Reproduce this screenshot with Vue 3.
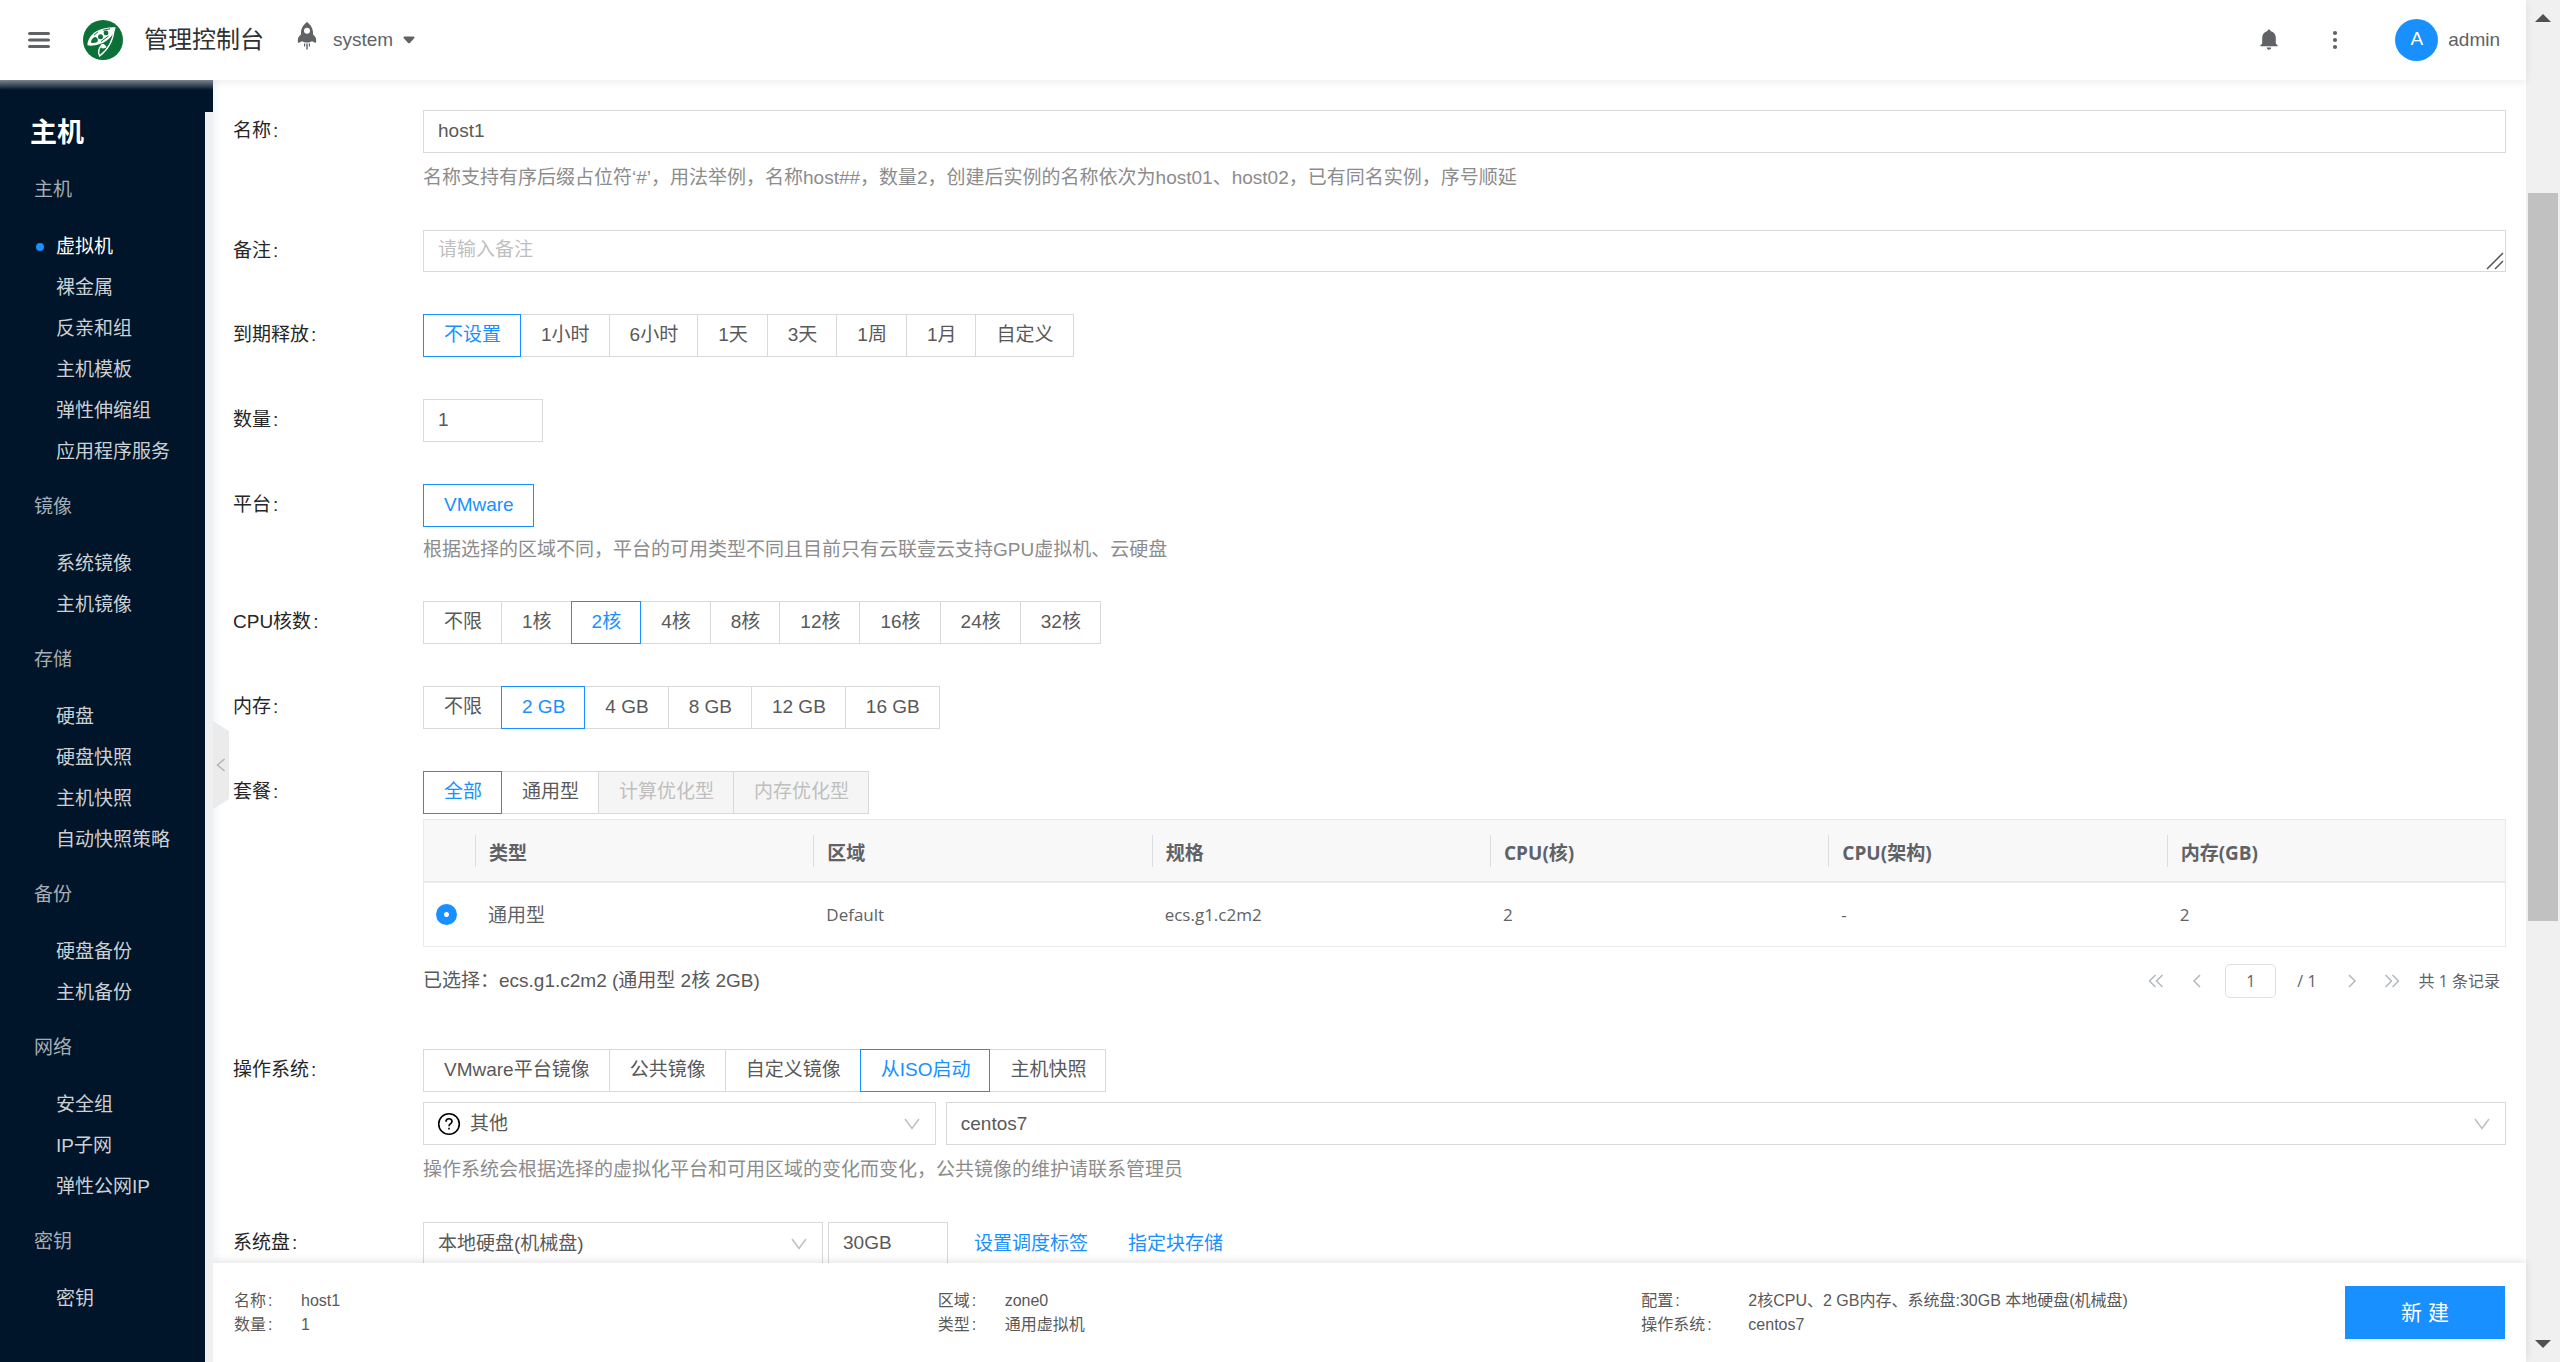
<script setup>
import { reactive } from 'vue'

const menu = [
  { title: '主机', items: ['虚拟机', '裸金属', '反亲和组', '主机模板', '弹性伸缩组', '应用程序服务'] },
  { title: '镜像', items: ['系统镜像', '主机镜像'] },
  { title: '存储', items: ['硬盘', '硬盘快照', '主机快照', '自动快照策略'] },
  { title: '备份', items: ['硬盘备份', '主机备份'] },
  { title: '网络', items: ['安全组', 'IP子网', '弹性公网IP'] },
  { title: '密钥', items: ['密钥'] },
]

const form = reactive({
  name: 'host1',
  remark: '',
  count: '1',
  release: '不设置',
  platform: 'VMware',
  cpu: '2核',
  memory: '2 GB',
  sku: '全部',
  skuRow: 'ecs.g1.c2m2',
  image: '从ISO启动',
  os: '其他',
  iso: 'centos7',
  disk: '本地硬盘(机械盘)',
  size: '30GB',
  page: '1',
})

const choices = {
  release: ['不设置', '1小时', '6小时', '1天', '3天', '1周', '1月', '自定义'],
  platform: ['VMware'],
  cpu: ['不限', '1核', '2核', '4核', '8核', '12核', '16核', '24核', '32核'],
  memory: ['不限', '2 GB', '4 GB', '8 GB', '12 GB', '16 GB'],
  sku: ['全部', '通用型', '计算优化型', '内存优化型'],
  image: ['VMware平台镜像', '公共镜像', '自定义镜像', '从ISO启动', '主机快照'],
}
const disabled = ['计算优化型', '内存优化型']

const columns = ['类型', '区域', '规格', 'CPU(核)', 'CPU(架构)', '内存(GB)']

const summary = [
  { rows: [['名称', 'host1'], ['数量', '1']] },
  { rows: [['区域', 'zone0'], ['类型', '通用虚拟机']] },
  { wide: true, rows: [['配置', '2核CPU、2 GB内存、系统盘:30GB 本地硬盘(机械盘)'], ['操作系统', 'centos7']] },
]
</script>

<template>
  <div class="window">
    <div class="app">
      <header class="topbar">
        <button class="icon-btn menu-btn" aria-label="菜单">
          <svg width="24" height="18" viewBox="0 0 24 18" fill="none" stroke="#606266" stroke-width="3" stroke-linecap="round">
            <path d="M2.5 2.5h19M2.5 9h19M2.5 15.500h19" />
          </svg>
        </button>
        <svg class="logo" width="40" height="40" viewBox="0 0 40 40">
          <circle cx="20" cy="20" r="20" fill="#0b7139" />
          <path d="M32.800 7.400C23 6.500 12 10 7.500 16.500C5.200 20 4 23.500 4.500 25.300C10 26.500 19 24.500 25 19.500C29 16 31.500 12 32.800 7.400Z" fill="#fff" />
          <path d="M31 8.700C30.500 19 25.500 29 16.600 36C14.500 32.500 15.500 28.500 19.500 24" fill="none" stroke="#fff" stroke-width="1.400" />
          <path d="M8 21.500c1-3 3.500-5 5-4.200c1.800.900 2.500 2.700 1.400 4.700c-2 .9-4.500 1.200-6.200.8z" fill="#0b7139" />
          <circle cx="17.500" cy="16.800" r="2.500" fill="#0b7139" />
          <circle cx="23" cy="13" r="2.400" fill="#0b7139" />
          <path d="M11 15.200L15 11.800M20 10.300L27 8.800M18 21.500L25.500 16" stroke="#0b7139" stroke-width="1" />
          <path d="M20.500 23.800l3 2.600c.3 1.500-4.800 3-5.300 1.200c-.2-1.400 1-2.800 2.300-3.800z" fill="#fff" />
        </svg>
        <h1 class="brand">管理控制台</h1>
        <svg class="rocket" width="20" height="28" viewBox="0 0 20 28" fill="#606266">
          <path fill-rule="evenodd" d="M10 0C6.500 2.500 4 6.500 4 10.500V12.500C2 14 .8 16 .8 18.200C.8 19.500 1 20.300 1.400 21L5 19.300C6.500 20.300 8 20.500 10 20.500S13.500 20.300 15 19.300L18.600 21C19 20.300 19.200 19.500 19.200 18.200C19.200 16 18 14 16 12.500V10.500C16 6.500 13.500 2.500 10 0ZM10 5.800a3 3 0 1 1 0 6a3 3 0 1 1 0-6Z" />
          <path d="M7 21.500h1.200v3H7zM9.300 21.500h1.400v6H9.300zM11.800 21.500H13v3h-1.200z" />
        </svg>
        <button class="text-btn">
          system
          <svg width="12" height="8" viewBox="0 0 12 8" fill="#606266"><path d="M1.500.5h9c1 0 1.300 1 .7 1.700L6.900 6.900c-.5.600-1.300.6-1.800 0L.8 2.200C.2 1.500.5.5 1.500.5z" /></svg>
        </button>
        <span class="spacer"></span>
        <button class="icon-btn bell" aria-label="通知">
          <svg width="18" height="22" viewBox="0 0 18 22" fill="#606266">
            <path d="M9 0.500c.9 0 1.500.6 1.500 1.500c3.400.7 5.300 3.400 5.300 6.800v5.700l1.900 1.900v.8H.3v-.8l1.900-1.900V8.800C2.200 5.400 4.100 2.700 7.500 2C7.500 1.100 8.100.5 9 .5zM6.800 18.600h4.400c0 1.300-1 2.200-2.200 2.200s-2.200-.9-2.200-2.200z" />
          </svg>
        </button>
        <button class="icon-btn dots" aria-label="更多">
          <svg width="6" height="20" viewBox="0 0 6 20" fill="#606266"><circle cx="3" cy="3" r="2.100" /><circle cx="3" cy="10" r="2.100" /><circle cx="3" cy="17" r="2.100" /></svg>
        </button>
        <button class="text-btn user"><span class="avatar">A</span>admin</button>
      </header>

      <div class="body">
        <aside class="side">
          <nav class="nav">
            <h2 class="nav-title">主机</h2>
            <section v-for="(g, gi) in menu" :key="gi" class="group">
              <h3 class="group-title">{{ g.title }}</h3>
              <a v-for="(t, i) in g.items" :key="t" href="#" class="item" :class="{ active: gi === 0 && i === 0 }">{{ t }}</a>
            </section>
          </nav>
          <div class="track"></div>
          <button class="fold" aria-label="收起">
            <svg width="10" height="14" viewBox="0 0 10 14" fill="none" stroke="#b4b4b4" stroke-width="1.500"><path d="M8.500 1L1.500 7l7 6" /></svg>
          </button>
        </aside>

        <div class="main">
          <form class="form" @submit.prevent>
            <div class="row">
              <label class="label" for="name">名称</label>
              <div>
                <input id="name" v-model="form.name" class="box full" type="text" />
                <p class="help">名称支持有序后缀占位符‘#’，用法举例，名称host##，数量2，创建后实例的名称依次为host01、host02，已有同名实例，序号顺延</p>
              </div>
            </div>

            <div class="row">
              <label class="label" for="remark">备注</label>
              <div class="area">
                <textarea id="remark" v-model="form.remark" class="box full" rows="1" placeholder="请输入备注"></textarea>
                <svg class="grip" width="18" height="18" viewBox="0 0 18 18" stroke="#555" stroke-width="1.500"><path d="M1 17L17 1M9 17l8-8" /></svg>
              </div>
            </div>

            <div class="row">
              <span id="l-release" class="label">到期释放</span>
              <div class="seg" role="radiogroup" aria-labelledby="l-release">
                <label v-for="o in choices.release" :key="o" class="opt"><input v-model="form.release" type="radio" name="release" :value="o" /><span>{{ o }}</span></label>
              </div>
            </div>

            <div class="row">
              <label class="label" for="count">数量</label>
              <div><input id="count" v-model="form.count" class="box short" type="text" /></div>
            </div>

            <div class="row">
              <span id="l-platform" class="label">平台</span>
              <div>
                <div class="seg" role="radiogroup" aria-labelledby="l-platform">
                  <label v-for="o in choices.platform" :key="o" class="opt"><input v-model="form.platform" type="radio" name="platform" :value="o" /><span>{{ o }}</span></label>
                </div>
                <p class="help near">根据选择的区域不同，平台的可用类型不同且目前只有云联壹云支持GPU虚拟机、云硬盘</p>
              </div>
            </div>

            <div class="row">
              <span id="l-cpu" class="label">CPU核数</span>
              <div class="seg" role="radiogroup" aria-labelledby="l-cpu">
                <label v-for="o in choices.cpu" :key="o" class="opt"><input v-model="form.cpu" type="radio" name="cpu" :value="o" /><span>{{ o }}</span></label>
              </div>
            </div>

            <div class="row">
              <span id="l-memory" class="label">内存</span>
              <div class="seg" role="radiogroup" aria-labelledby="l-memory">
                <label v-for="o in choices.memory" :key="o" class="opt"><input v-model="form.memory" type="radio" name="memory" :value="o" /><span>{{ o }}</span></label>
              </div>
            </div>

            <div class="row">
              <span id="l-sku" class="label">套餐</span>
              <div>
                <div class="seg" role="radiogroup" aria-labelledby="l-sku">
                  <label v-for="o in choices.sku" :key="o" class="opt"><input v-model="form.sku" type="radio" name="sku" :value="o" :disabled="disabled.includes(o)" /><span>{{ o }}</span></label>
                </div>
                <table class="grid">
                  <thead>
                    <tr>
                      <th class="pick"></th>
                      <th v-for="c in columns" :key="c"><div class="th">{{ c }}</div></th>
                    </tr>
                  </thead>
                  <tbody>
                    <tr>
                      <td class="pick"><input v-model="form.skuRow" class="radio" type="radio" name="skuRow" value="ecs.g1.c2m2" aria-label="ecs.g1.c2m2" /></td>
                      <td>通用型</td>
                      <td class="latin">Default</td>
                      <td class="latin">ecs.g1.c2m2</td>
                      <td class="latin">2</td>
                      <td class="latin">-</td>
                      <td class="latin">2</td>
                    </tr>
                  </tbody>
                </table>
                <div class="under">
                  <span>已选择：ecs.g1.c2m2 (通用型 2核 2GB)</span>
                  <div class="pager">
                    <button class="pg" aria-label="首页"><svg width="16" height="14" viewBox="0 0 16 14"><path d="M7.500 1L1.500 7l6 6M14.500 1L8.500 7l6 6" /></svg></button>
                    <button class="pg prev" aria-label="上一页"><svg width="10" height="14" viewBox="0 0 10 14"><path d="M8 1L2 7l6 6" /></svg></button>
                    <input v-model="form.page" class="page" type="text" aria-label="页码" />
                    <span class="total">/ 1</span>
                    <button class="pg next" aria-label="下一页"><svg width="10" height="14" viewBox="0 0 10 14"><path d="M2 1l6 6l-6 6" /></svg></button>
                    <button class="pg last" aria-label="末页"><svg width="16" height="14" viewBox="0 0 16 14"><path d="M1.500 1l6 6l-6 6M8.500 1l6 6l-6 6" /></svg></button>
                    <span class="records">共 1 条记录</span>
                  </div>
                </div>
              </div>
            </div>

            <div class="row">
              <span id="l-image" class="label">操作系统</span>
              <div>
                <div class="seg" role="radiogroup" aria-labelledby="l-image">
                  <label v-for="o in choices.image" :key="o" class="opt"><input v-model="form.image" type="radio" name="image" :value="o" /><span>{{ o }}</span></label>
                </div>
                <div class="pair">
                  <div class="sel os">
                    <select v-model="form.os" class="box full" aria-label="系统类型"><option>其他</option></select>
                    <svg class="ask" width="24" height="24" viewBox="0 0 24 24" fill="none" stroke="#000" stroke-width="1.600">
                      <circle cx="12" cy="12" r="10.300" /><path d="M9 9.700c0-1.800 1.300-2.900 3-2.900s3 1.100 3 2.700c0 2.100-3 2.300-3 4.700" /><path d="M12 15.800v1.800" />
                    </svg>
                    <svg class="arrow" width="16" height="12" viewBox="0 0 16 12"><path d="M1 1l7 9.500L15 1" /></svg>
                  </div>
                  <div class="sel iso">
                    <select v-model="form.iso" class="box full" aria-label="ISO镜像"><option>centos7</option></select>
                    <svg class="arrow" width="16" height="12" viewBox="0 0 16 12"><path d="M1 1l7 9.500L15 1" /></svg>
                  </div>
                </div>
                <p class="help">操作系统会根据选择的虚拟化平台和可用区域的变化而变化，公共镜像的维护请联系管理员</p>
              </div>
            </div>

            <div class="row">
              <label class="label" for="disk">系统盘</label>
              <div class="disk">
                <div class="sel medium">
                  <select id="disk" v-model="form.disk" class="box full"><option>本地硬盘(机械盘)</option></select>
                  <svg class="arrow" width="16" height="12" viewBox="0 0 16 12"><path d="M1 1l7 9.500L15 1" /></svg>
                </div>
                <input v-model="form.size" class="box short" type="text" aria-label="容量" />
                <a href="#" class="link">设置调度标签</a>
                <a href="#" class="link">指定块存储</a>
              </div>
            </div>
          </form>

          <footer class="footer">
            <dl v-for="(s, i) in summary" :key="i" class="sum" :class="{ wide: s.wide }">
              <div v-for="r in s.rows" :key="r[0]" class="pairline">
                <dt>{{ r[0] }}</dt>
                <dd>{{ r[1] }}</dd>
              </div>
            </dl>
            <button class="primary">新 建</button>
          </footer>
        </div>
      </div>
    </div>

    <div class="scroll" aria-hidden="true">
      <i class="up"></i>
      <div class="rail"><div class="thumb"></div></div>
      <i class="down"></i>
    </div>
  </div>
</template>

<style>
body {
  margin: 0;
}
</style>

<style scoped>
* {
  box-sizing: border-box;
}
.window {
  display: flex;
  height: 100vh;
  overflow: hidden;
  background: #fff;
  color: #595959;
  font-family: "Liberation Sans", "Noto Sans CJK SC", sans-serif;
  font-size: 19px;
  line-height: 24px;
}
.app {
  flex: 1;
  min-width: 0;
  display: flex;
  flex-direction: column;
}
button,
input,
select,
textarea {
  font: inherit;
  color: inherit;
  outline: none;
}
button {
  border: 0;
  padding: 0;
  background: none;
  cursor: pointer;
}
h1,
h2,
h3,
p,
dl,
dd {
  margin: 0;
}
a {
  text-decoration: none;
}

.topbar {
  position: relative;
  z-index: 2;
  flex: none;
  display: flex;
  align-items: center;
  height: 80px;
  padding: 0 26px 0 28px;
  background: #fff;
  box-shadow: 0 2px 8px rgba(0, 0, 0, 0.08);
  color: #606266;
}
.icon-btn {
  display: flex;
}
.menu-btn {
  margin-left: -1px;
}
.logo {
  margin-left: 32px;
}
.brand {
  margin-left: 21px;
  font-size: 24px;
  line-height: 36px;
  font-weight: 400;
  color: #303133;
}
.rocket {
  margin: 0 16px 8px 33px;
}
.text-btn {
  display: flex;
  align-items: center;
  gap: 10px;
  white-space: nowrap;
}
.spacer {
  flex: 1;
}
.bell {
  margin-right: 54px;
}
.dots {
  margin-right: 57px;
}
.avatar {
  width: 43px;
  height: 42px;
  border-radius: 50%;
  background: #1890ff;
  color: #fff;
  line-height: 40px;
  text-align: center;
}

.body {
  flex: 1;
  min-height: 0;
  display: flex;
}
.side {
  position: relative;
  z-index: 1;
  flex: none;
  width: 213px;
  display: flex;
  background: #001529;
}
.side::before {
  content: "";
  position: absolute;
  z-index: 3;
  top: 0;
  left: 0;
  right: 0;
  height: 10px;
  background: linear-gradient(rgba(255, 255, 255, 0.5), rgba(255, 255, 255, 0));
}
.nav {
  flex: 1;
  overflow: hidden;
  padding-top: 35px;
}
.nav-title {
  padding-left: 30px;
  margin-bottom: 21px;
  font-size: 27px;
  line-height: 36px;
  font-weight: 700;
  color: #fff;
}
.group {
  padding-bottom: 17px;
}
.group-title {
  padding-left: 34px;
  margin-bottom: 18px;
  font-size: 19px;
  line-height: 36px;
  font-weight: 400;
  color: #a6adb4;
}
.item {
  display: flex;
  align-items: center;
  height: 41px;
  padding-left: 56px;
  color: #ccd0d4;
  white-space: nowrap;
}
.item.active {
  color: #fff;
  padding-left: 36px;
}
.item.active::before {
  content: "";
  width: 8px;
  height: 8px;
  margin-right: 12px;
  border-radius: 50%;
  background: #1890ff;
}
.track {
  width: 8px;
  margin-top: 32px;
  background: #eff0f1;
}
.fold {
  position: absolute;
  left: 100%;
  top: 50%;
  width: 16px;
  height: 88px;
  display: flex;
  align-items: center;
  justify-content: center;
  background: #ebebeb;
  clip-path: polygon(0 0, 100% 10px, 100% 78px, 0 100%);
}

.main {
  flex: 1;
  min-width: 0;
  display: flex;
  flex-direction: column;
  background: linear-gradient(90deg, #f2f5f9, #fff 8px);
}
.form {
  flex: 1;
  min-height: 0;
  overflow: hidden;
  padding: 30px 20px 0;
}
.row {
  display: grid;
  grid-template-columns: 190px minmax(0, 1fr);
  margin-bottom: 42px;
}
.label {
  line-height: 41px;
  color: #262626;
}
.label::after {
  content: ":";
  margin-left: 2px;
}
.box {
  display: block;
  height: 43px;
  padding: 0 14px;
  border: 1px solid #d9d9d9;
  border-radius: 0;
  background: #fff;
  line-height: 41px;
}
.full {
  width: 100%;
}
.short {
  width: 120px;
}
input.box {
  padding-bottom: 2px;
}
select.box {
  padding-bottom: 1px;
}
.help {
  margin-top: 14px;
  margin-bottom: -1px;
  line-height: 22px;
  color: #8c8c8c;
}
.help.near {
  margin-top: 12px;
  margin-bottom: -2px;
}
.area {
  position: relative;
}
textarea.box {
  height: 42px;
  padding: 0 14px;
  line-height: 38px;
  resize: none;
  overflow: hidden;
}
textarea::placeholder {
  color: #bfbfbf;
}
.grip {
  position: absolute;
  right: 2px;
  bottom: 2px;
}

.seg {
  display: flex;
}
.opt {
  position: relative;
  margin-left: -1px;
  cursor: pointer;
}
.opt:first-child {
  margin-left: 0;
}
.opt input {
  position: absolute;
  inset: 0;
  margin: 0;
  opacity: 0;
}
.opt span {
  display: block;
  height: 43px;
  padding: 0 19px 0 20px;
  border: 1px solid #d9d9d9;
  background: #fff;
  line-height: 40px;
  white-space: nowrap;
}
.opt input:checked + span {
  position: relative;
  z-index: 1;
  border-color: #1890ff;
  color: #1890ff;
}
.opt input:disabled + span {
  background: #f5f5f5;
  color: #bfbfbf;
}

.grid {
  width: 100%;
  height: 128px;
  margin-top: 5px;
  border: 1px solid #e8eaec;
  border-collapse: separate;
  border-spacing: 0;
  table-layout: fixed;
  font-family: "Open Sans", "Noto Sans CJK SC", sans-serif;
  color: #606266;
}
.grid th,
.grid td {
  height: 63px;
  padding: 0 13px;
  text-align: left;
}
.grid th {
  padding: 0;
  background: #f8f8f9;
  border-bottom: 2px solid #e8eaec;
}
.grid .pick {
  width: 51px;
  padding: 0 0 0 12px;
}
.th {
  height: 32px;
  padding-left: 13px;
  border-left: 1px solid #dcdee2;
  line-height: 36px;
}
.grid .latin {
  font-size: 17px;
}
.radio {
  appearance: none;
  display: block;
  width: 21px;
  height: 21px;
  margin: 0;
  border-radius: 50%;
  background: radial-gradient(circle, #fff 2px, #1890ff 3px);
}
.under {
  display: flex;
  align-items: center;
  justify-content: space-between;
  height: 34px;
  margin: 17px 0 9px;
}
.pager {
  display: flex;
  align-items: center;
  padding-right: 6px;
  font-family: "Open Sans", "Noto Sans CJK SC", sans-serif;
  font-size: 16px;
  color: #606266;
}
.pg {
  display: flex;
}
.pg svg {
  fill: none;
  stroke: #b4b8c0;
  stroke-width: 1.5px;
}
.prev {
  margin: 0 23px 0 28px;
}
.page {
  width: 51px;
  height: 34px;
  padding: 0;
  border: 1px solid #dcdfe6;
  border-radius: 5px;
  text-align: center;
  background: #fff;
}
.total {
  margin-left: 21px;
}
.next {
  margin: 0 27px 0 30px;
}
.last {
  margin-right: 19px;
}

.pair {
  display: flex;
  gap: 10px;
  margin-top: 10px;
}
.sel {
  position: relative;
}
.sel select {
  appearance: none;
}
.os {
  flex: 0 0 calc(25% - 8px);
}
.os select {
  padding-left: 46px;
}
.iso {
  flex: 1;
}
.medium {
  width: 400px;
}
.ask {
  position: absolute;
  left: 14px;
  top: 10px;
}
.arrow {
  position: absolute;
  right: 16px;
  top: 16px;
  fill: none;
  stroke: #bfbfbf;
  stroke-width: 1.5px;
  pointer-events: none;
}
.disk {
  display: flex;
  align-items: center;
  gap: 5px;
}
.link {
  margin: 0 14px 0 21px;
  color: #1890ff;
}

.footer {
  position: relative;
  flex: none;
  display: flex;
  align-items: center;
  min-height: 99px;
  padding: 0 21px;
  background: #fff;
  box-shadow: 0 -2px 8px rgba(0, 0, 0, 0.1);
  font-size: 16px;
}
.sum {
  flex: 1;
}
.pairline {
  display: flex;
  line-height: 24px;
}
.sum dt {
  width: 67px;
}
.sum.wide dt {
  width: 107px;
}
.sum dt::after {
  content: ":";
  margin-left: 2px;
}
.primary {
  width: 160px;
  height: 53px;
  background: #1890ff;
  box-shadow: 0 3px 0 rgba(0, 0, 0, 0.04);
  color: #fff;
  font-size: 21px;
}

.scroll {
  flex: none;
  width: 34px;
  display: flex;
  flex-direction: column;
  align-items: center;
  padding: 14px 0;
  background: #f0f0f0;
}
.up,
.down {
  border: 8px solid transparent;
}
.up {
  border-top: 0;
  border-bottom-color: #505050;
}
.down {
  border-bottom: 0;
  border-top-color: #505050;
}
.rail {
  flex: 1;
  width: 30px;
  padding-top: 171px;
}
.thumb {
  height: 63.5%;
  background: #c1c1c1;
}
</style>
